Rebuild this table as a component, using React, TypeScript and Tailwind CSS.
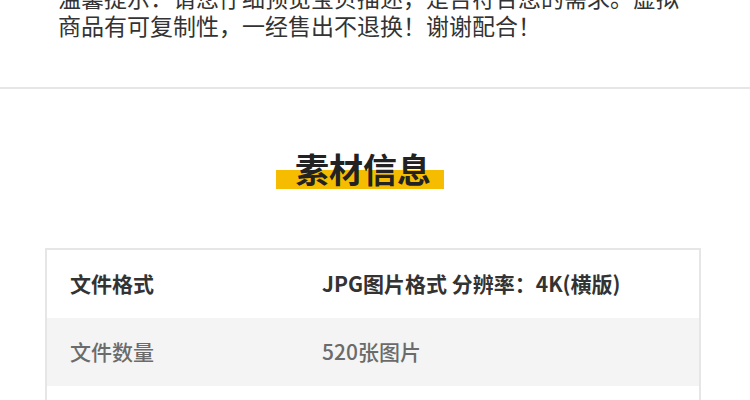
import React from "react";

const font = { fontFamily: '"Noto Sans CJK SC", "Noto Sans", sans-serif' };

export default function App() {
  return (
    <div className="w-[750px] h-[400px] overflow-hidden bg-white" style={font}>
      <div className="mt-[-17px] pl-[58px] pr-[40px] text-[23px] leading-[28px] text-[#333333]">
        <p>温馨提示：请您仔细预览宝贝描述，是否符合您的需求。虚拟</p>
        <p>商品有可复制性，一经售出不退换！谢谢配合！</p>
      </div>
      <div className="mt-[48px] h-[2px] bg-[#e6e6e6]" />
      <div className="mt-[60px] ml-[276px] w-[168px] relative h-[40px]">
        <div className="absolute left-0 right-0 bottom-0 h-[19px] bg-[#f6bd00]" />
        <div className="relative pl-[19px] text-[34px] leading-[40px] font-bold text-[#222222]">
          素材信息
        </div>
      </div>
      <div className="mt-[59px] ml-[45px] w-[656px] border-2 border-[#e6e6e6] h-[200px]">
        <div className="grid grid-cols-[252px_1fr] items-center h-[68px] pl-[23px] text-[21px] font-bold text-[#333333]">
          <span>文件格式</span>
          <span>JPG图片格式 分辨率：4K(横版)</span>
        </div>
        <div className="grid grid-cols-[252px_1fr] items-center h-[68px] pl-[23px] text-[21px] font-medium text-[#6b6b6b] bg-[#f4f4f4]">
          <span>文件数量</span>
          <span>520张图片</span>
        </div>
      </div>
    </div>
  );
}
